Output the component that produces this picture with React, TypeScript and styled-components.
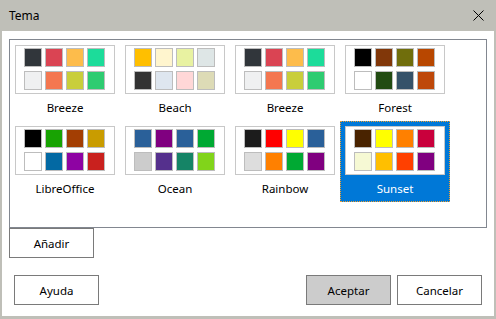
import styled, { createGlobalStyle } from 'styled-components';

const GlobalStyle = createGlobalStyle`
  html, body {
    margin: 0;
    padding: 0;
    background: #ffffff;
  }
  * {
    box-sizing: border-box;
  }
`;

type Theme = { name: string; colors: string[] };

const THEMES: Theme[] = [
  { name: 'Breeze', colors: ['#31363b', '#da4453', '#fdbc4b', '#1cdc9a', '#eff0f1', '#f47750', '#c9ce3b', '#2ecc71'] },
  { name: 'Beach', colors: ['#ffbf00', '#fff5ce', '#e8f2a1', '#dee6e6', '#333333', '#dee6ef', '#ffd7d7', '#dddbb6'] },
  { name: 'Breeze', colors: ['#31363b', '#da4453', '#fdbc4b', '#1cdc9a', '#eff0f1', '#f47750', '#c9ce3b', '#2ecc71'] },
  { name: 'Forest', colors: ['#000000', '#813709', '#706e0c', '#b84700', '#ffffff', '#224b12', '#355269', '#be480a'] },
  { name: 'LibreOffice', colors: ['#000000', '#18a303', '#a33e03', '#c99c00', '#ffffff', '#0369a3', '#8e03a3', '#c9211e'] },
  { name: 'Ocean', colors: ['#2a6099', '#800080', '#2a6099', '#00a933', '#cccccc', '#55308d', '#158466', '#81d41a'] },
  { name: 'Rainbow', colors: ['#1c1c1c', '#ff0000', '#ffff00', '#2a6099', '#dddddd', '#ff8000', '#00a933', '#800080'] },
  { name: 'Sunset', colors: ['#492300', '#ffff00', '#ff8000', '#c9003c', '#f6f9d4', '#ffbf00', '#ff4000', '#800080'] },
];

const SELECTED = 7;

/**
 * Styles
 */

const Window = styled.div`
  width: 496px;
  height: 319px;
  background: #bfbfb8;
  display: flex;
  flex-direction: column;
  padding: 0 2px 3px 2px;
  font-family: 'Noto Sans', 'Open Sans', sans-serif;
  font-size: 11.5px;
  color: #000000;
`;

const TitleBar = styled.div`
  height: 31px;
  flex-shrink: 0;
  display: flex;
  align-items: center;
  justify-content: space-between;
  padding: 0 10px 0 7px;
`;

const Title = styled.span`
  font-size: 12px;
  margin-top: -1px;
`;

const CloseButton = styled.div`
  width: 12px;
  height: 12px;
  display: flex;
  align-items: center;
  justify-content: center;
  margin-top: -1px;
`;

const Body = styled.div`
  flex: 1;
  background: #ffffff;
  display: flex;
  flex-direction: column;
  padding: 8px 7px 0 7px;
`;

const Frame = styled.div`
  width: 478px;
  height: 189px;
  border: 1px solid #828790;
  display: grid;
  grid-template-columns: repeat(4, 110px);
  grid-auto-rows: 81px;
  align-content: start;
`;

const Cell = styled.div<{ $selected?: boolean }>`
  display: flex;
  flex-direction: column;
  align-items: center;
  padding: 4px;
  border: 1px ${({ $selected }) => ($selected ? 'dotted #f0a030' : 'solid transparent')};
  background: ${({ $selected }) => ($selected ? '#0078d7' : 'transparent')};
  color: ${({ $selected }) => ($selected ? '#ffffff' : '#000000')};
`;

const Preview = styled.div`
  width: 100px;
  height: 50px;
  border: 1px solid #c8c8c8;
  background: #ffffff;
  display: grid;
  grid-template-columns: repeat(4, 18px);
  grid-template-rows: repeat(2, 19px);
  column-gap: 3px;
  row-gap: 4px;
  padding: 2px 0 0 8px;
`;

const Swatch = styled.div<{ $color: string }>`
  border: 1px solid #bdbdbd;
  background: ${({ $color }) => $color};
`;

const Label = styled.div`
  margin-top: 6px;
  line-height: 16px;
`;

const Button = styled.button<{ $primary?: boolean }>`
  width: 85px;
  height: 30px;
  border: 1px solid #7a7a7a;
  background: ${({ $primary }) => ($primary ? '#cccccc' : '#ffffff')};
  font-family: inherit;
  font-size: 11.5px;
  color: #000000;
  padding: 0;
`;

const AddRow = styled.div`
  display: flex;
`;

const Footer = styled.div`
  display: flex;
  align-items: center;
  gap: 6px;
  margin-top: 17px;
  padding: 0 5px;
`;

const Spacer = styled.div`
  flex: 1;
`;

/**
 * Styles
 */

function ThemeCell({ theme, selected }: { theme: Theme; selected?: boolean }) {
  return (
    <Cell $selected={selected}>
      <Preview>
        {theme.colors.map((c, i) => (
          <Swatch key={i} $color={c} />
        ))}
      </Preview>
      <Label>{theme.name}</Label>
    </Cell>
  );
}

export default function App() {
  return (
    <>
      <GlobalStyle />
      <Window>
        <TitleBar>
          <Title>Tema</Title>
          <CloseButton>
            <svg width="11" height="11" viewBox="0 0 11 11">
              <path d="M0.5 0.5 L10.5 10.5 M10.5 0.5 L0.5 10.5" stroke="#000" strokeWidth="1" fill="none" />
            </svg>
          </CloseButton>
        </TitleBar>
        <Body>
          <Frame>
            {THEMES.map((t, i) => (
              <ThemeCell key={i} theme={t} selected={i === SELECTED} />
            ))}
          </Frame>
          <AddRow>
            <Button>Añadir</Button>
          </AddRow>
          <Footer>
            <Button>Ayuda</Button>
            <Spacer />
            <Button $primary>Aceptar</Button>
            <Button>Cancelar</Button>
          </Footer>
        </Body>
      </Window>
    </>
  );
}
